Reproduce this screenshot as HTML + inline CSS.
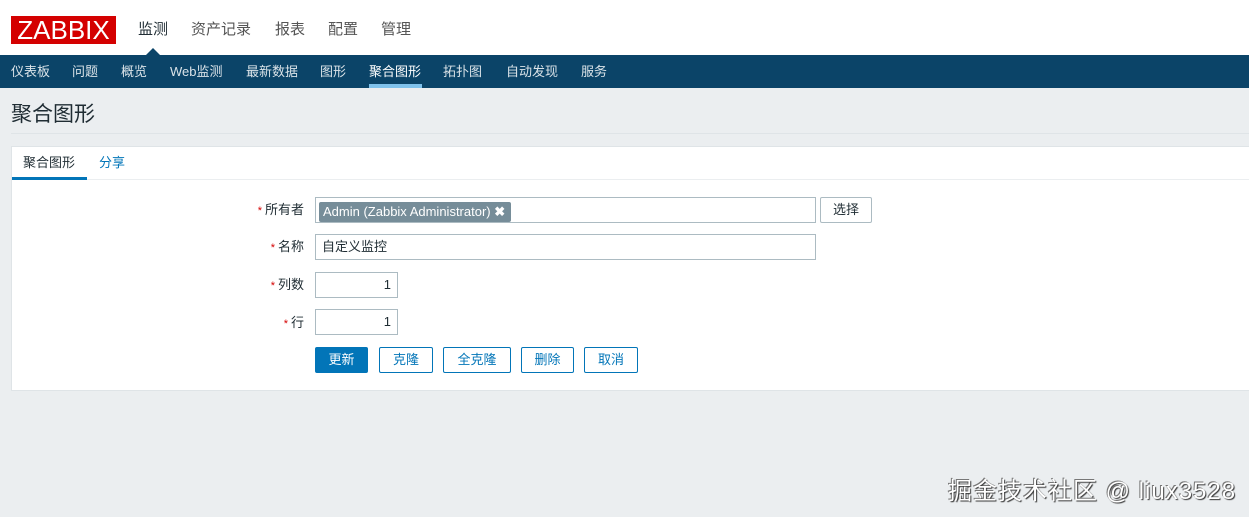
<!DOCTYPE html>
<html><head><meta charset="utf-8"><style>
*{margin:0;padding:0;box-sizing:border-box}
body{width:1249px;height:517px;overflow:hidden;background:#ebeef0;font-family:"Liberation Sans","Noto Sans CJK SC",sans-serif;font-size:13px;color:#1f2c33;position:relative}
.abs{position:absolute}
.top{left:0;top:0;width:1249px;height:55px;background:#fff}
.logo{left:11px;top:16px;width:105px;height:28px;background:#d40000;color:#fff;font-size:26px;line-height:29px;text-align:center}
.tm{top:18px;font-size:15px;color:#1f2c33}
.nav{left:0;top:55px;width:1249px;height:33px;background:#0b4468}
.nav span{position:absolute;top:6px;color:#fff;font-size:13px;opacity:.85}
.nav span.on{opacity:1}
.ul{left:369px;top:84px;width:53px;height:4px;background:#7fc2ec}
.arrow{left:146px;top:48px;width:0;height:0;border-left:7px solid transparent;border-right:7px solid transparent;border-bottom:7px solid #0b4468}
h1{position:absolute;left:11px;top:98px;font-size:21px;font-weight:normal;color:#1f2c33}
.hr{left:11px;top:133px;width:1238px;height:1px;background:#dfe4e7}
.card{left:11px;top:146px;width:1240px;height:245px;background:#fff;border:1px solid #dfe4e7}
.tabline{left:12px;top:179px;width:1237px;height:1px;background:#ebeef0}
.tabul{left:12px;top:177px;width:75px;height:3px;background:#0275b8}
.lbl{font-size:13px;text-align:right;width:120px}
.lbl b{color:#d40000;font-weight:normal;font-size:11px;margin-right:3px}
.in{border:1px solid #acbbc2;background:#fff;height:26px;font-size:13px;line-height:24px;padding:0 6px}
.btn{border:1px solid #0275b8;color:#0275b8;background:#fff;height:26px;line-height:24px;text-align:center;border-radius:2px;font-size:13px}
</style></head><body>
<div class="abs top"></div>
<div class="abs logo">ZABBIX</div>
<div class="abs tm" style="left:138px">监测</div>
<div class="abs tm" style="left:191px;color:#555">资产记录</div>
<div class="abs tm" style="left:275px;color:#555">报表</div>
<div class="abs tm" style="left:328px;color:#555">配置</div>
<div class="abs tm" style="left:381px;color:#555">管理</div>
<div class="abs arrow"></div>
<div class="abs nav">
<span style="left:11px">仪表板</span><span style="left:72px">问题</span><span style="left:121px">概览</span><span style="left:170px">Web监测</span><span style="left:246px">最新数据</span><span style="left:320px">图形</span><span class="on" style="left:369px">聚合图形</span><span style="left:443px">拓扑图</span><span style="left:506px">自动发现</span><span style="left:581px">服务</span>
</div>
<div class="abs ul"></div>
<h1>聚合图形</h1>
<div class="abs hr"></div>
<div class="abs card"></div>
<div class="abs" style="left:23px;top:152px">聚合图形</div>
<div class="abs" style="left:99px;top:152px;color:#0275b8">分享</div>
<div class="abs tabline"></div>
<div class="abs tabul"></div>
<div class="abs lbl" style="left:184px;top:199px"><b>*</b>所有者</div>
<div class="abs lbl" style="left:184px;top:236px"><b>*</b>名称</div>
<div class="abs lbl" style="left:184px;top:274px"><b>*</b>列数</div>
<div class="abs lbl" style="left:184px;top:312px"><b>*</b>行</div>
<div class="abs in" style="left:315px;top:197px;width:501px;padding:2px 3px"><span style="display:inline-block;background:#768d99;color:#fff;height:20px;line-height:19px;padding:0 6px 0 4px;border-radius:2px">Admin (Zabbix Administrator) <b>✖</b></span></div>
<div class="abs btn" style="left:820px;top:197px;width:52px;border-color:#acbbc2;color:#1f2c33">选择</div>
<div class="abs in" style="left:315px;top:234px;width:501px">自定义监控</div>
<div class="abs in" style="left:315px;top:272px;width:83px;text-align:right">1</div>
<div class="abs in" style="left:315px;top:309px;width:83px;text-align:right">1</div>
<div class="abs btn" style="left:315px;top:347px;width:53px;background:#0275b8;color:#fff">更新</div>
<div class="abs btn" style="left:379px;top:347px;width:54px">克隆</div>
<div class="abs btn" style="left:443px;top:347px;width:68px">全克隆</div>
<div class="abs btn" style="left:521px;top:347px;width:53px">删除</div>
<div class="abs btn" style="left:584px;top:347px;width:54px">取消</div>
<div class="abs" style="left:948px;top:471px;font-size:24px;letter-spacing:1px;color:#fff;white-space:nowrap;text-shadow:1px 1px 1px #333,-1px -1px 0 #777">掘金技术社区 @ liux3528</div>
</body></html>
